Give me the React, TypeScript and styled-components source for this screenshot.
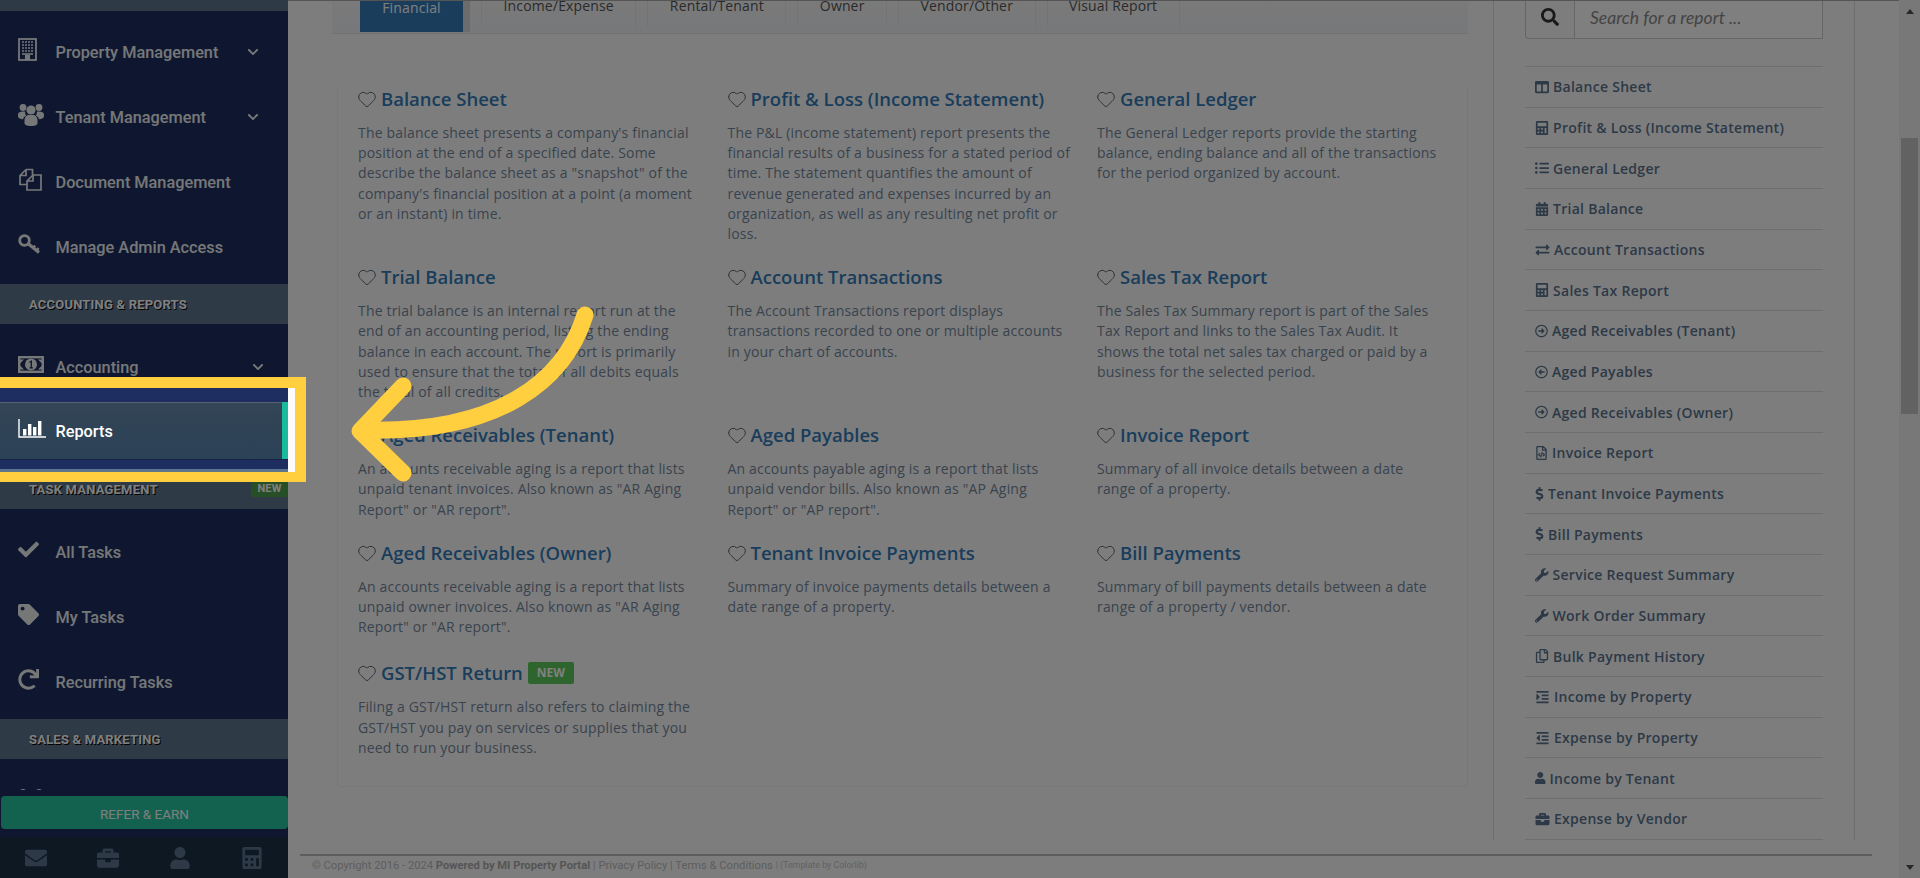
import React from "react";
import styled, { createGlobalStyle } from "styled-components";
import { Heart } from "lucide-react";
import {
  FaRegCopy, FaCheck, FaTag, FaRedo,
  FaChevronDown, FaEnvelope, FaBriefcase, FaUser, FaCalculator, FaSearch, FaColumns, FaListUl,
  FaCalendarAlt, FaExchangeAlt, FaRegArrowAltCircleRight, FaRegArrowAltCircleLeft, FaRegFileCode,
  FaDollarSign, FaWrench, FaIndent, FaOutdent,
} from "react-icons/fa";

const Global = createGlobalStyle`
  html, body { margin: 0; padding: 0; height: 100%; overflow: hidden; background: #fff; }
  #root { height: 100%; }
  * { box-sizing: border-box; }
`;

const Page = styled.div`
  display: flex;
  height: 878px;
  width: 1920px;
  position: relative;
  overflow: hidden;
  font-family: "Open Sans", "Noto Sans", sans-serif;
  color: #73879c;
  font-size: 14px;
  background: #fbfbfb;
`;

const Sidebar = styled.aside`
  width: 288px;
  flex: none;
  display: flex;
  flex-direction: column;
  background: #1e2e60;
  font-family: Roboto, "Liberation Sans", sans-serif;
`;
const Menu = styled.nav`
  height: 790px;
  overflow: hidden;
  flex: none;
`;
const SectionHead = styled.div<{ $short?: boolean }>`
  height: ${(p) => (p.$short ? "11px" : "40px")};
  background: #5c748c;
  display: flex;
  align-items: center;
  padding-left: 29px;
  position: relative;
  font-size: 13px;
  font-weight: 700;
  letter-spacing: 0.2px;
  color: #fff;
  text-shadow: 1px 1px #000;
`;
const SideNew = styled.span`
  position: absolute;
  right: 0;
  top: 10px;
  width: 37px;
  height: 18px;
  border-radius: 3px 0 0 3px;
  background: #4f9e4f;
  display: flex;
  align-items: center;
  justify-content: center;
  font-size: 11px;
  text-shadow: none;
`;
const Group = styled.div<{ $top: number }>`
  padding: ${(p) => p.$top}px 0 5px;
`;
const Item = styled.div<{ $active?: boolean }>`
  height: ${(p) => (p.$active ? "57px" : "65px")};
  margin: ${(p) => (p.$active ? "3px 0 5px" : "0")};
  display: flex;
  align-items: center;
  padding: 1px 0 0 18px;
  font-size: 16.3px;
  font-weight: 500;
  color: #ecf0f1;
  position: relative;
  ${(p) =>
    p.$active &&
    `background: linear-gradient(#334556, #2c4257);
     box-shadow: rgba(0,0,0,.25) 0 1px 0, inset rgba(255,255,255,.16) 0 1px 0;
     border-right: 6px solid #1abb9c;
     color: #fff;`}
`;
const ItemIcon = styled.span`
  width: 37.5px;
  flex: none;
  display: flex;
  align-items: center;
  margin-bottom: 5px;
  font-size: 21px;
  line-height: 0;
`;
const Chevron = styled(FaChevronDown)<{ $far?: boolean }>`
  position: absolute;
  left: ${(p) => (p.$far ? "252px" : "247px")};
  top: 27px;
  font-size: 12px;
`;
const Bottom = styled.div`
  flex: 1;
  display: flex;
  flex-direction: column;
`;
const Refer = styled.div`
  margin: 6px 0 8px 1px;
  height: 33px;
  padding-top: 3px;
  border-radius: 4px;
  background: #26c49e;
  color: #fff;
  display: flex;
  align-items: center;
  justify-content: center;
  font-size: 13.5px;
`;
const SideFooter = styled.div`
  flex: 1;
  background: #1a3044;
  display: grid;
  grid-template-columns: repeat(4, 72px);
  align-items: center;
  justify-items: center;
  color: #5a738e;
  font-size: 22px;
`;

const Main = styled.main`
  flex: 1;
  min-width: 0;
  display: flex;
  flex-direction: column;
  border-top: 1px solid #aaa;
  height: 878px;
`;
const Body = styled.div`
  flex: none;
  height: 853px;
  display: flex;
  padding-left: 44px;
`;
const LeftCol = styled.div`
  width: 1136px;
  flex: none;
`;
const Strip = styled.div`
  height: 33px;
  background: linear-gradient(#f4f4f4, #eef1f4);
  border-bottom: 1px solid #e2e4e8;
  padding-left: 28px;
  display: flex;
  gap: 11px;
  overflow: hidden;
`;
const Tab = styled.div<{ $active?: boolean }>`
  height: 30px;
  padding: 0 21.5px;
  margin-top: -5px;
  line-height: 20px;
  font-size: 14px;
  letter-spacing: 0.15px;
  color: #555;
  border-left: 1px solid #e4e6ea;
  border-right: 1px solid #e4e6ea;
  ${(p) =>
    p.$active &&
    `background: #337ab7;
     color: #fff;
     height: 36px;
     width: 110px;
     padding: 2px 0 0 0;
     text-align: center;
     border-left: 0;
     border-right: 7px solid #d8d8d8;`}
`;
const Card = styled.section`
  margin: 54px 0 0 5px;
  height: 699px;
  border: 1px solid #f0f0f0;
  border-top: 0;
  border-radius: 0 0 4px 4px;
  padding: 0 0 0 20px;
  display: grid;
  grid-template-columns: repeat(3, 369.5px);
  grid-auto-rows: min-content;
  row-gap: 22px;
`;
const Report = styled.article<{ $badged?: boolean }>`
  margin-top: ${(p) => (p.$badged ? "3px" : "0")};
`;
const ReportTitle = styled.h3`
  margin: 0 0 13px;
  height: 22px;
  display: flex;
  align-items: center;
  gap: 4px;
  font-size: 18.5px;
  line-height: 22px;
  font-weight: 600;
  color: #337ab7;
`;
const Hearted = styled(Heart)`
  color: #5c6670;
  flex: none;
  margin-left: -1px;
`;
const NewBadge = styled.span`
  background: #5cc95a;
  color: #fff;
  font-size: 12px;
  font-weight: 700;
  border-radius: 2px;
  width: 46px;
  height: 22px;
  margin-left: 1px;
  display: flex;
  align-items: center;
  justify-content: center;
`;
const ReportText = styled.p`
  margin: 0;
  width: 345.5px;
  font-size: 14px;
  letter-spacing: 0.18px;
  line-height: 20.2px;
`;

const RightPanel = styled.div`
  margin-left: 25px;
  width: 362px;
  height: 839px;
  flex: none;
  border-left: 1px solid #dcdcdc;
  border-right: 1px solid #dcdcdc;
  padding: 0 31px 0 31px;
`;
const Search = styled.div`
  height: 38px;
  display: flex;
`;
const SearchBtn = styled.div`
  width: 49px;
  border: 1px solid #ccc;
  border-top: 0;
  border-right: 0;
  border-radius: 0 0 0 4px;
  display: flex;
  align-items: center;
  justify-content: center;
  color: #333;
  font-size: 18px;
  padding-bottom: 6px;
`;
const SearchInput = styled.input`
  flex: 1;
  min-width: 0;
  border: 1px solid #ccc;
  border-top: 0;
  outline: 0;
  background: #fff;
  padding: 0 0 5px 15px;
  font: italic 17.5px Lato, "Open Sans", sans-serif;
  &::placeholder { color: #888; opacity: 1; }
`;
const List = styled.ul`
  list-style: none;
  margin: 27px 0 0;
  padding: 0;
  border-bottom: 1px solid #dcdcdc;
`;
const Row = styled.li`
  height: 40.68px;
  border-top: 1px solid #dcdcdc;
  display: flex;
  align-items: center;
  gap: 4px;
  padding-left: 10px;
  font-size: 14px;
  font-weight: 600;
  letter-spacing: 0.28px;
  color: #5a738e;
`;
const RowIcon = styled.span<{ $w: number }>`
  flex: none;
  width: ${(p) => p.$w}px;
  display: flex;
  svg { width: 100%; height: 14px; }
`;

const Foot = styled.footer`
  margin: 0 27px 0 12px;
  height: 24px;
  border-top: 2px solid #bbb;
  padding: 0 0 4px 12px;
  font-family: Roboto, sans-serif;
  font-size: 11.2px;
  color: #bcbcbc;
  display: flex;
  align-items: center;
  white-space: pre;
`;
const FootStrong = styled.b`
  color: #aaa;
`;
const FootSmall = styled.small`
  font-size: 8.9px;
  color: #c4c4c4;
`;

const Scrollbar = styled.div`
  width: 21px;
  flex: none;
  background: #f1f1f1;
  display: flex;
  flex-direction: column;
  align-items: center;
  height: 878px;
`;
const ArrowUp = styled.div`
  margin-top: 9px;
  border: 4.5px solid transparent;
  border-top: 0;
  border-bottom: 5px solid #505050;
`;
const Thumb = styled.div`
  width: 17px;
  height: 276px;
  margin-top: 124px;
  background: #c4c4c4;
`;
const ArrowDown = styled.div`
  margin-top: auto;
  margin-bottom: 8px;
  border: 4.5px solid transparent;
  border-bottom: 0;
  border-top: 5px solid #505050;
`;

const Highlight = styled.div`
  position: absolute;
  left: -12px;
  top: 377px;
  width: 318px;
  height: 105px;
  border: solid #ffcf3f;
  border-width: 11px 11px 10px 12px;
  box-shadow: 0 0 0 2400px rgba(0, 0, 0, 0.5);
  pointer-events: none;
`;
const ArrowSvg = styled.svg`
  position: absolute;
  left: 0;
  top: 0;
  pointer-events: none;
`;

/* Font Awesome 4 era glyphs, drawn to match the reference */
const BuildingIcon = () => (
  <svg width="19" height="23" viewBox="0 0 19 23">
    <rect x="1" y="1" width="17" height="21" fill="none" stroke="currentColor" strokeWidth="1.8" />
    <path d="M4 4h11M4 7h11M4 10h11M4 13h11" stroke="currentColor" strokeWidth="1.6" strokeDasharray="2 1" fill="none" />
    <rect x="7" y="17" width="5" height="5" fill="currentColor" />
    <path d="M4 16h11" stroke="currentColor" strokeWidth="1.6" fill="none" />
  </svg>
);
const UsersIcon = () => (
  <svg width="26" height="23" viewBox="0 0 26 23" fill="currentColor">
    <circle cx="5" cy="4.5" r="3.4" />
    <circle cx="21" cy="4.5" r="3.4" />
    <circle cx="13" cy="7" r="4.6" />
    <path d="M0 11.5C0 9.5 2 8.5 5 8.5c.9 0 1.6.1 2.2.3C7 10 7.3 11.5 8.2 12.6 6.6 13.4 5.4 14.6 5 16.2 2 16 0 15 0 13.5z" />
    <path d="M26 11.5c0-2-2-3-5-3-.9 0-1.6.1-2.2.3.2 1.2-.1 2.7-1 3.8 1.6.8 2.8 2 3.2 3.6 3-.2 5-1.2 5-2.7z" />
    <path d="M6.5 17c0-3 2-5 4.3-5h4.4c2.3 0 4.3 2 4.3 5v3c0 2-2 3-6.5 3s-6.5-1-6.5-3z" />
  </svg>
);
const FilesIcon = () => (
  <svg width="24" height="23" viewBox="0 0 24 23" fill="none" stroke="currentColor" strokeWidth="1.7">
    <path d="M8 1.5 2 7.5V16.5H8.5M8 1.5H14.5V7M8 1.5V7.5H2" />
    <path d="M15 7 9 13V22H23V7ZM15 7V13H9" />
  </svg>
);
const KeyIcon = () => (
  <svg width="23" height="21" viewBox="0 0 23 21" fill="none" stroke="currentColor">
    <circle cx="6.5" cy="6.5" r="4.8" strokeWidth="2.8" />
    <path d="M10.5 10 21 18.5" strokeWidth="3.2" />
    <path d="M15 14.5 17 11.5M18.5 17 20.5 14" strokeWidth="2.4" />
  </svg>
);
const MoneyIcon = () => (
  <svg width="26" height="17" viewBox="0 0 26 17">
    <rect x="1.2" y="1.2" width="23.6" height="14.6" fill="none" stroke="currentColor" strokeWidth="2.4" />
    <path d="M2 3.5h4L2 7.5zM24 3.5h-4l4 4zM2 13.5h4l-4-4zM24 13.5h-4l4-4z" fill="currentColor" />
    <circle cx="13" cy="8.5" r="6" fill="currentColor" />
    <path d="M11.5 6.5 13.3 5.3V11.8M11.5 11.8H15" fill="none" stroke="#1e2e60" strokeWidth="1.3" />
  </svg>
);
const ChartIcon = () => (
  <svg width="28" height="19" viewBox="0 0 28 19" fill="currentColor">
    <path d="M1 0V18H28" fill="none" stroke="currentColor" strokeWidth="1.4" />
    <rect x="5" y="10" width="3.4" height="6.5" />
    <rect x="10" y="5" width="3.4" height="11.5" />
    <rect x="15" y="8" width="3.4" height="8.5" />
    <rect x="20" y="2" width="3.4" height="14.5" />
  </svg>
);

const reports: { t: string; d: string; isNew?: boolean }[] = [
  { t: "Balance Sheet", d: `The balance sheet presents a company's financial position at the end of a specified date. Some describe the balance sheet as a "snapshot" of the company's financial position at a point (a moment or an instant) in time.` },
  { t: "Profit & Loss (Income Statement)", d: "The P&L (income statement) report presents the financial results of a business for a stated period of time. The statement quantifies the amount of revenue generated and expenses incurred by an organization, as well as any resulting net profit or loss." },
  { t: "General Ledger", d: "The General Ledger reports provide the starting balance, ending balance and all of the transactions for the period organized by account." },
  { t: "Trial Balance", d: "The trial balance is an internal report run at the end of an accounting period, listing the ending balance in each account. The report is primarily used to ensure that the total of all debits equals the total of all credits." },
  { t: "Account Transactions", d: "The Account Transactions report displays transactions recorded to one or multiple accounts in your chart of accounts." },
  { t: "Sales Tax Report", d: "The Sales Tax Summary report is part of the Sales Tax Report and links to the Sales Tax Audit. It shows the total net sales tax charged or paid by a business for the selected period." },
  { t: "Aged Receivables (Tenant)", d: `An accounts receivable aging is a report that lists unpaid tenant invoices. Also known as "AR Aging Report" or "AR report".` },
  { t: "Aged Payables", d: `An accounts payable aging is a report that lists unpaid vendor bills. Also known as "AP Aging Report" or "AP report".` },
  { t: "Invoice Report", d: "Summary of all invoice details between a date range of a property." },
  { t: "Aged Receivables (Owner)", d: `An accounts receivable aging is a report that lists unpaid owner invoices. Also known as "AR Aging Report" or "AR report".` },
  { t: "Tenant Invoice Payments", d: "Summary of invoice payments details between a date range of a property." },
  { t: "Bill Payments", d: "Summary of bill payments details between a date range of a property / vendor." },
  { t: "GST/HST Return", isNew: true, d: "Filing a GST/HST return also refers to claiming the GST/HST you pay on services or supplies that you need to run your business." },
];

const links: [React.ReactNode, number, string][] = [
  [<FaColumns />, 14, "Balance Sheet"],
  [<FaCalculator />, 14, "Profit & Loss (Income Statement)"],
  [<FaListUl />, 14, "General Ledger"],
  [<FaCalendarAlt />, 14, "Trial Balance"],
  [<FaExchangeAlt />, 15, "Account Transactions"],
  [<FaCalculator />, 14, "Sales Tax Report"],
  [<FaRegArrowAltCircleRight />, 13, "Aged Receivables (Tenant)"],
  [<FaRegArrowAltCircleLeft />, 13, "Aged Payables"],
  [<FaRegArrowAltCircleRight />, 13, "Aged Receivables (Owner)"],
  [<FaRegFileCode />, 13, "Invoice Report"],
  [<FaDollarSign />, 9, "Tenant Invoice Payments"],
  [<FaDollarSign />, 9, "Bill Payments"],
  [<FaWrench />, 13.5, "Service Request Summary"],
  [<FaWrench />, 13.5, "Work Order Summary"],
  [<FaRegCopy />, 14, "Bulk Payment History"],
  [<FaIndent />, 15, "Income by Property"],
  [<FaOutdent />, 15, "Expense by Property"],
  [<FaUser />, 10.5, "Income by Tenant"],
  [<FaBriefcase />, 15, "Expense by Vendor"],
];

const tabs = ["Financial", "Income/Expense", "Rental/Tenant", "Owner", "Vendor/Other", "Visual Report"];

const NavItem = ({ icon, label, more, far, active }: { icon: React.ReactNode; label: string; more?: boolean; far?: boolean; active?: boolean }) => (
  <Item $active={active}>
    <ItemIcon>{icon}</ItemIcon>
    {label}
    {more && <Chevron $far={far} />}
  </Item>
);

export default function App() {
  return (
    <Page>
      <Global />
      <Sidebar>
        <Menu>
          <SectionHead $short />
          <Group $top={8}>
            <NavItem icon={<BuildingIcon />} label="Property Management" more />
            <NavItem icon={<UsersIcon />} label="Tenant Management" more />
            <NavItem icon={<FilesIcon />} label="Document Management" />
            <NavItem icon={<KeyIcon />} label="Manage Admin Access" />
          </Group>
          <SectionHead>ACCOUNTING &amp; REPORTS</SectionHead>
          <Group $top={10}>
            <NavItem icon={<MoneyIcon />} label="Accounting" more far />
            <NavItem icon={<ChartIcon />} label="Reports" active />
          </Group>
          <SectionHead>
            TASK MANAGEMENT
            <SideNew>NEW</SideNew>
          </SectionHead>
          <Group $top={10}>
            <NavItem icon={<FaCheck />} label="All Tasks" />
            <NavItem icon={<FaTag />} label="My Tasks" />
            <NavItem icon={<FaRedo />} label="Recurring Tasks" />
          </Group>
          <SectionHead>SALES &amp; MARKETING</SectionHead>
          <Group $top={10}>
            <NavItem icon={<UsersIcon />} label="" />
          </Group>
        </Menu>
        <Bottom>
          <Refer>REFER &amp; EARN</Refer>
          <SideFooter>
            <FaEnvelope />
            <FaBriefcase />
            <FaUser />
            <FaCalculator />
          </SideFooter>
        </Bottom>
      </Sidebar>
      <Main>
        <Body>
          <LeftCol>
            <Strip>
              {tabs.map((t, i) => (
                <Tab key={t} $active={i === 0}>{t}</Tab>
              ))}
            </Strip>
            <Card>
              {reports.map((r) => (
                <Report key={r.t} $badged={r.isNew}>
                  <ReportTitle>
                    <Hearted size={20} strokeWidth={1.2} />
                    {r.t}
                    {r.isNew && <NewBadge>NEW</NewBadge>}
                  </ReportTitle>
                  <ReportText>{r.d}</ReportText>
                </Report>
              ))}
            </Card>
          </LeftCol>
          <RightPanel>
            <Search>
              <SearchBtn><FaSearch /></SearchBtn>
              <SearchInput placeholder="Search for a report ..." readOnly />
            </Search>
            <List>
              {links.map(([ic, w, l]) => (
                <Row key={l}><RowIcon $w={w}>{ic}</RowIcon>{l}</Row>
              ))}
            </List>
          </RightPanel>
        </Body>
        <Foot>
          © Copyright 2016 - 2024 <FootStrong>Powered by MI Property Portal</FootStrong> | Privacy Policy | Terms &amp; Conditions <FootSmall>| (Template by Colorlib)</FootSmall>
        </Foot>
      </Main>
      <Scrollbar>
        <ArrowUp />
        <Thumb />
        <ArrowDown />
      </Scrollbar>
      <Highlight />
      <ArrowSvg width="1920" height="878" viewBox="0 0 1920 878" fill="none" stroke="#ffcf3f" strokeWidth="17" strokeLinecap="round" strokeLinejoin="round">
        <path d="M585 315C565 380 500 434 362 430" />
        <path d="M403 386L360 431L403 473" />
      </ArrowSvg>
    </Page>
  );
}
